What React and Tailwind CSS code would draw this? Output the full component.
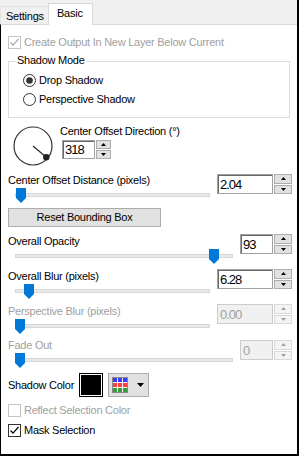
import React from "react";

function Check({ color }) {
    return (
        <svg width="11" height="11" viewBox="0 0 11 11">
            <path d="M1.5 5.5L4 8.2L9.5 2" fill="none" stroke={color} strokeWidth="1.2" />
        </svg>
    );
}

function Checkbox({ checked, disabled, label }) {
    return (
        <div className="flex h-[13px] items-center">
            <span className={`flex h-[13px] w-[13px] shrink-0 items-center justify-center border bg-white ${disabled ? "border-[#c4c4c4]" : "border-[#333333]"}`}>
                {checked && <Check color={disabled ? "#a8a8a8" : "#000"} />}
            </span>
            <span className={`ml-[3px] ${disabled ? "text-[#a0a0a0]" : "text-black"}`}>{label}</span>
        </div>
    );
}

function Radio({ checked, label }) {
    return (
        <div className="flex h-[13px] items-center">
            <svg width="13" height="13" viewBox="0 0 13 13">
                <circle cx="6.5" cy="6.5" r="6" fill="#fff" stroke="#333" />
                {checked && <circle cx="6.5" cy="6.5" r="3.3" fill="#333" />}
            </svg>
            <span className="ml-[3px]">{label}</span>
        </div>
    );
}

function SpinBtn({ up, disabled }) {
    return (
        <div className={`flex flex-1 items-center justify-center border ${disabled ? "border-[#d9d9d9] bg-[#f4f4f4]" : "border-[#adadad] bg-[#e1e1e1]"}`}>
            <svg width="5" height="3" viewBox="0 0 5 3">
                <path d={up ? "M0 3L2.5 0L5 3Z" : "M0 0L5 0L2.5 3Z"} fill={disabled ? "#a0a0a0" : "#000"} />
            </svg>
        </div>
    );
}

function SpinBox({ value, inputCls, btnCls = "w-[18px]", hCls = "h-[20px]", disabled }) {
    return (
        <div className={`flex ${hCls}`}>
            <div className={`flex h-full items-center border pl-[2px] text-[13px] tracking-[-1px] ${inputCls} ${disabled ? "border-[#cccccc] bg-[#f0f0f0] text-[#a0a0a0]" : "border-[#a0a0a0] bg-white text-black shadow-[inset_1px_1px_0_#696969]"}`}>
                {value}
            </div>
            <div className={`ml-px flex flex-col gap-px ${btnCls}`}>
                <SpinBtn up disabled={disabled} />
                <SpinBtn disabled={disabled} />
            </div>
        </div>
    );
}

function Slider({ trackCls, thumbCls }) {
    return (
        <div className={`relative ml-[7px] h-[16px] ${trackCls}`}>
            <div className="absolute left-0 right-0 top-[6px] h-[4px] border border-[#d6d6d6] bg-[#e7eaea]" />
            <svg className={`absolute top-[1px] ${thumbCls}`} width="10" height="15" viewBox="0 0 10 15">
                <path d="M0 0H10V10L5 15L0 10Z" fill="#0078d7" />
            </svg>
        </div>
    );
}

function SliderRow({ label, disabled, trackCls, thumbCls, spin, rowCls, spinCls = "" }) {
    return (
        <div className={`flex pl-[7px] pr-[5px] ${rowCls}`}>
            <div className="flex flex-1 flex-col">
                <span className={`h-[13px] ${disabled ? "text-[#a0a0a0]" : "text-black"}`}>{label}</span>
                <Slider trackCls={trackCls} thumbCls={thumbCls} />
            </div>
            <div className={spinCls}>{spin}</div>
        </div>
    );
}

export default function App() {
    return (
        <div className="flex h-[456px] w-[299px] flex-col border-b-2 border-r-2 border-black bg-white font-['Liberation_Sans',Arial,sans-serif] text-[11px] leading-[13px] tracking-[-0.25px] text-black">
            {/* Tabs */}
            <div className="flex h-[24px] shrink-0 items-end bg-[#f0f0f0]">
                <div className="h-[18px] w-[48px] border-l border-t border-[#e3e3e3] pl-[5px] pt-[3px]">Settings</div>
                <div className="relative z-10 -mb-px h-[22px] w-[45px] border border-b-0 border-[#d9d9d9] bg-white pl-[8px] pt-[3px]">Basic</div>
            </div>

            {/* Panel */}
            <div className="flex flex-1 flex-col border-l border-t border-l-black border-t-[#d9d9d9]">
                <div className="ml-[7px] mt-[11px]">
                    <Checkbox checked disabled label="Create Output In New Layer Below Current" />
                </div>

                <div className="relative ml-[7px] mr-[7px] mt-[12px] h-[57px] border border-[#dcdcdc] pl-[14px] pt-[12px]">
                    <span className="absolute -top-[8px] left-[7px] bg-white px-px">Shadow Mode</span>
                    <Radio checked label="Drop Shadow" />
                    <div className="mt-[6px]">
                        <Radio label="Perspective Shadow" />
                    </div>
                </div>

                <div className="mt-[7px] flex pl-[12px]">
                    <svg className="mt-px shrink-0" width="40" height="40" viewBox="0 0 40 40">
                        <circle cx="20" cy="20" r="19" fill="none" stroke="#333" strokeWidth="1.2" />
                        <line x1="20" y1="20" x2="33.3" y2="31.3" stroke="#333" strokeWidth="1.4" />
                        <circle cx="33.3" cy="31.3" r="3.2" fill="#222" />
                    </svg>
                    <div className="ml-[7px] flex flex-col">
                        <span>Center Offset Direction (°)</span>
                        <div className="ml-[2px] mt-[2px]">
                            <SpinBox value="318" inputCls="w-[33px]" btnCls="w-[15px]" hCls="h-[19px]" />
                        </div>
                    </div>
                </div>

                <SliderRow
                    rowCls="mt-[8px]"
                    label="Center Offset Distance (pixels)"
                    trackCls="w-[195px]"
                    thumbCls="left-[1px]"
                    spin={<SpinBox value="2.04" inputCls="w-[56px]" />}
                />

                <button className="ml-[7px] mt-[5px] flex h-[19px] w-[153px] items-center justify-center border border-[#adadad] bg-[#e1e1e1]">
                    Reset Bounding Box
                </button>

                <SliderRow
                    rowCls="mt-[8px]"
                    spinCls="-mt-px"
                    label="Overall Opacity"
                    trackCls="w-[218px]"
                    thumbCls="left-[194px]"
                    spin={<SpinBox value="93" inputCls="w-[33px]" />}
                />

                <SliderRow
                    rowCls="mt-[6px]"
                    spinCls="-mt-px"
                    label="Overall Blur (pixels)"
                    trackCls="w-[195px]"
                    thumbCls="left-[9px]"
                    spin={<SpinBox value="6.28" inputCls="w-[56px]" />}
                />

                <SliderRow
                    rowCls="mt-[6px]"
                    spinCls="-mt-px"
                    disabled
                    label="Perspective Blur (pixels)"
                    trackCls="w-[195px]"
                    thumbCls="left-0"
                    spin={<SpinBox value="0.00" inputCls="w-[56px]" disabled />}
                />

                <SliderRow
                    rowCls="mt-[5px]"
                    spinCls="mt-px"
                    disabled
                    label="Fade Out"
                    trackCls="w-[218px]"
                    thumbCls="left-0"
                    spin={<SpinBox value="0" inputCls="w-[33px]" disabled />}
                />

                <div className="mt-[5px] flex h-[24px] items-center pl-[7px]">
                    <span className="w-[71px]">Shadow Color</span>
                    <div className="h-[24px] w-[24px] border border-black bg-white p-px">
                        <div className="h-full w-full bg-black" />
                    </div>
                    <div className="ml-[5px] flex h-[24px] w-[41px] items-center border border-[#adadad] bg-[#e1e1e1] pl-[3px]">
                        <svg width="16" height="16" viewBox="0 0 16 16">
                            <rect x="0.5" y="0.5" width="15" height="15" fill="#f4f4f4" stroke="#8a8a8a" />
                            <rect x="1" y="1" width="4" height="4" fill="#3c3cff" />
                            <rect x="6" y="1" width="4" height="4" fill="#3c3cff" />
                            <rect x="11" y="1" width="4" height="4" fill="#3c3cff" />
                            <rect x="1" y="6" width="4" height="4" fill="#ff4040" />
                            <rect x="6" y="6" width="4" height="4" fill="#ff4040" />
                            <rect x="11" y="6" width="4" height="4" fill="#ff4040" />
                            <rect x="1" y="11" width="4" height="4" fill="#3a9a3a" />
                            <rect x="6" y="11" width="4" height="4" fill="#3a9a3a" />
                            <rect x="11" y="11" width="4" height="4" fill="#3a9a3a" />
                        </svg>
                        <svg className="ml-[9px]" width="7" height="4" viewBox="0 0 7 4">
                            <path d="M0 0H7L3.5 4Z" fill="#000" />
                        </svg>
                    </div>
                </div>

                <div className="ml-[7px] mt-[7px]">
                    <Checkbox disabled label="Reflect Selection Color" />
                </div>
                <div className="ml-[7px] mt-[7px]">
                    <Checkbox checked label="Mask Selection" />
                </div>
            </div>
        </div>
    );
}
